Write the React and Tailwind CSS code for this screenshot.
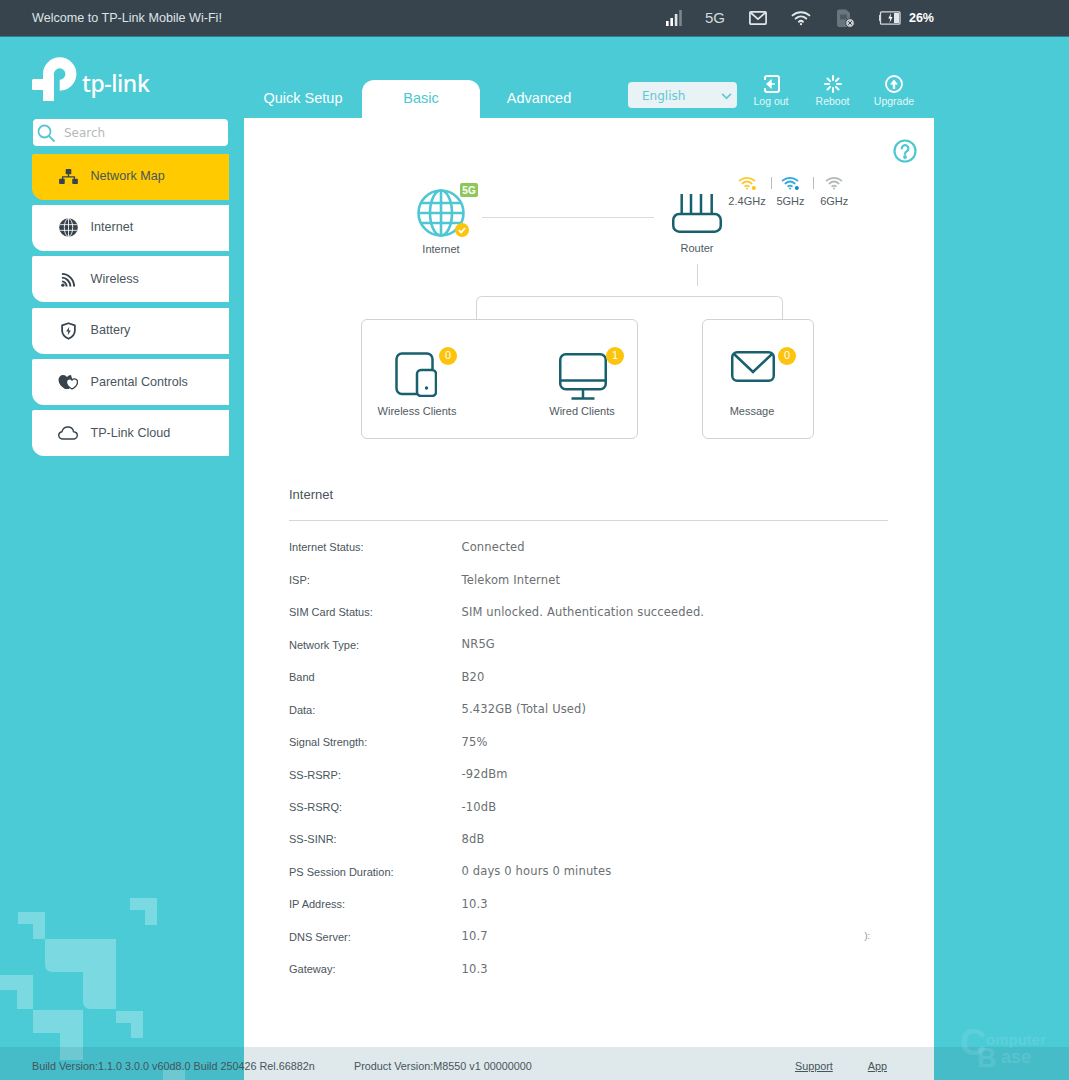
import React from 'react';

const details = [
    ['Internet Status:', 'Connected'],
    ['ISP:', 'Telekom Internet'],
    ['SIM Card Status:', 'SIM unlocked. Authentication succeeded.'],
    ['Network Type:', 'NR5G'],
    ['Band', 'B20'],
    ['Data:', '5.432GB (Total Used)'],
    ['Signal Strength:', '75%'],
    ['SS-RSRP:', '-92dBm'],
    ['SS-RSRQ:', '-10dB'],
    ['SS-SINR:', '8dB'],
    ['PS Session Duration:', '0 days 0 hours 0 minutes'],
    ['IP Address:', '10.3'],
    ['DNS Server:', '10.7', '):'],
    ['Gateway:', '10.3'],
];

const WifiIcon = ({ color, dot, className }) => (
    <svg viewBox="0 0 20 15" className={className} fill="none" stroke={color} strokeWidth="1.9" strokeLinecap="round">
        <path d="M1.5 5C6 1 13 1 17.5 5" />
        <path d="M4.5 8C7.5 5.5 11.5 5.5 14.5 8" />
        <path d="M7.5 11C8.8 10 10.2 10 11.5 11" />
        <circle cx="9.5" cy="13.4" r="1.1" fill={color} stroke="none" />
        {dot && <circle cx="16.8" cy="12.8" r="2.1" fill={dot} stroke="none" />}
    </svg>
);

const NetworkIcon = () => (
    <svg viewBox="0 0 20 16" className="w-[19px] h-[15px]" fill="#37444d">
        <rect x="7" y="0" width="6" height="5.5" rx="0.8" />
        <rect x="0" y="10.5" width="6" height="5.5" rx="0.8" />
        <rect x="14" y="10.5" width="6" height="5.5" rx="0.8" />
        <path d="M9.3 5h1.4v2.6H17v3h-1.4V9H4.4v1.6H3v-3h6.3z" />
    </svg>
);

const GlobeIcon = () => (
    <svg viewBox="0 0 20 20" className="w-[19px] h-[19px]">
        <circle cx="10" cy="10" r="9.8" fill="#37444d" />
        <g fill="none" stroke="#fff" strokeWidth="0.9">
            <ellipse cx="10" cy="10" rx="4.4" ry="9.5" />
            <path d="M10 .5v19M1.2 7h17.6M1.2 13h17.6" />
        </g>
    </svg>
);

const RssIcon = () => (
    <svg viewBox="0 0 16 16" className="w-[15px] h-[15px]" fill="none" stroke="#37444d" strokeWidth="2.1">
        <path d="M1 2c7 0 13 6 13 13.5" />
        <path d="M1 6c4.800 0 9 4.200 9 9.500" />
        <path d="M1 10c2.600 0 5 2.400 5 5.500" />
        <circle cx="2" cy="14" r="1.800" fill="#37444d" stroke="none" />
    </svg>
);

const ShieldIcon = () => (
    <svg viewBox="0 0 16 19" className="w-[15px] h-[18px]">
        <path d="M8 1.200 14.800 3.500V9c0 4-2.800 7-6.800 8.800C4 16 1.200 13 1.200 9V3.500z" fill="none" stroke="#37444d" strokeWidth="1.900" strokeLinejoin="round" />
        <path d="M8.800 5 5.500 10h2.200l-.5 4 3.300-5H8.300z" fill="#37444d" />
    </svg>
);

const HeartsIcon = () => (
    <svg viewBox="0 0 20 16" className="w-[20px] h-[16px]">
        <path d="M7 15C3 12.500.5 9.500.5 6 .5 3 2.500 1 5 1c1.800 0 3.200.900 4 2.200C10 1.900 11.300 1 13 1l2 7-4 7z" fill="#37444d" />
        <path d="M14 15c-3-1.800-5.500-4-5.500-6.800 0-2 1.500-3.400 3.200-3.400 1 0 1.800.500 2.300 1.200.5-.7 1.300-1.200 2.300-1.200 1.700 0 3.200 1.400 3.200 3.400C19.500 11 17 13.200 14 15z" fill="#fff" stroke="#37444d" strokeWidth="1.300" />
    </svg>
);

const CloudIcon = () => (
    <svg viewBox="0 0 20 14" className="w-[20px] h-[14px]" fill="none" stroke="#37444d" strokeWidth="1.400" strokeLinejoin="round">
        <path d="M5 13c-2.400 0-4.300-1.600-4.300-3.700 0-1.900 1.400-3.300 3.200-3.600C4.700 3 7 1 9.800 1c3 0 5.300 2 5.700 4.700 2.100.2 3.800 1.600 3.800 3.600 0 2.100-1.800 3.700-4 3.700z" />
    </svg>
);

const navItems = [
    { label: 'Network Map', icon: <NetworkIcon />, active: true },
    { label: 'Internet', icon: <GlobeIcon /> },
    { label: 'Wireless', icon: <RssIcon /> },
    { label: 'Battery', icon: <ShieldIcon /> },
    { label: 'Parental Controls', icon: <HeartsIcon /> },
    { label: 'TP-Link Cloud', icon: <CloudIcon /> },
];

const Badge = ({ value, className }) => (
    <div className={`absolute w-[18px] h-[18px] rounded-full bg-[#fcc40c] text-white text-[11px] flex items-center justify-center ${className}`}>{value}</div>
);

const StatusBar = () => (
    <div className="h-[37px] bg-[#37444d] border-b border-[#2f7f8c] flex items-center pl-[32px] pr-[135px] text-[12.6px] text-[#dfe3e5]">
        <span>Welcome to TP-Link Mobile Wi-Fi!</span>
        <div className="ml-auto flex items-center">
            <svg viewBox="0 0 16 16" className="w-[16px] h-[16px]">
                <rect x="0" y="11" width="2.600" height="5" fill="#fff" />
                <rect x="4.400" y="8" width="2.600" height="8" fill="#fff" />
                <rect x="8.800" y="4" width="2.600" height="12" fill="#dfe3e5" />
                <rect x="13.200" y="0" width="2.600" height="16" fill="#7b868d" />
            </svg>
            <span className="ml-[23px] text-[15px] text-[#d5d9dc]">5G</span>
            <svg viewBox="0 0 18 14" className="ml-[24px] w-[18px] h-[14px]" fill="none" stroke="#e3e6e8" strokeWidth="1.700">
                <rect x="0.900" y="0.900" width="16.200" height="12.200" rx="1" />
                <path d="M1.500 1.500 9 8.200l7.500-6.700" />
            </svg>
            <WifiIcon color="#e3e6e8" className="ml-[24px] w-[21px] h-[16px]" />
            <svg viewBox="0 0 19 19" className="ml-[24px] w-[19px] h-[19px]">
                <path d="M3 .5h7l4 3.500v12a2 2 0 0 1-2 2H3a2 2 0 0 1-2-2v-13.500a2 2 0 0 1 2-2z" fill="#6a767d" />
                <rect x="4" y="5.500" width="7" height="5" rx="0.600" fill="#4d5a62" />
                <circle cx="14" cy="14" r="4.400" fill="#c5cacd" stroke="#37444d" />
                <path d="M12.300 12.300l3.400 3.400m0-3.400-3.400 3.400" stroke="#37444d" strokeWidth="1" />
            </svg>
            <svg viewBox="0 0 22 14" className="ml-[24px] w-[22px] h-[14px]">
                <rect x="1.500" y="0.800" width="19.500" height="12.400" rx="1" fill="none" stroke="#d5d9dc" strokeWidth="1.300" />
                <rect x="0" y="4" width="1.300" height="6" fill="#d5d9dc" />
                <rect x="15" y="2" width="5" height="10" fill="#e3e6e8" />
                <path d="M12 2 9.300 7.500h2l-.8 4.500 3-6h-2z" fill="#fff" />
            </svg>
            <span className="ml-[8px] text-[12.5px] font-bold text-white">26%</span>
        </div>
    </div>
);

const Sidebar = () => (
    <div className="w-[197px] mr-[15px] shrink-0">
        <div className="h-[82px] pt-[20px] flex items-start">
            <svg viewBox="0 0 46 46" className="w-[46px] h-[46px]">
                <path d="M16.500 44V17a11.200 11.200 0 1 1 11.200 11.200" fill="none" stroke="#fff" strokeWidth="11" />
                <rect x="0" y="22" width="22" height="11" rx="1.500" fill="#fff" />
            </svg>
            <span className="ml-[4px] mt-[8px] font-['Noto_Sans',sans-serif] text-[23px] leading-[36px] font-medium tracking-[-0.4px] text-white">tp-link</span>
        </div>
        <div className="ml-[1px] w-[195px] h-[27px] pt-[1px] bg-white rounded-[4px] flex items-center pl-[4px]">
            <svg viewBox="0 0 18 18" className="w-[18px] h-[18px]" fill="none" stroke="#59c6d2" strokeWidth="1.800" strokeLinecap="round">
                <circle cx="7.500" cy="7.500" r="6" />
                <path d="M12 12l5 5" />
            </svg>
            <span className="ml-[9px] font-['DejaVu_Sans',sans-serif] text-[12px] text-[#b5b9bc]">Search</span>
        </div>
        <div className="mt-[7.5px] flex flex-col gap-[5.4px]">
            {navItems.map((item) => (
                <div key={item.label} className={`h-[46px] rounded-bl-[12px] rounded-tl-[2px] flex items-center text-[12.6px] text-[#4a555c] ${item.active ? 'bg-[#ffcb00] text-[#3e4a3a]' : 'bg-white'}`}>
                    <div className="ml-[24px] mr-[10.5px] w-[24px] flex justify-center">{item.icon}</div>
                    {item.label}
                </div>
            ))}
        </div>
    </div>
);

const TopNav = () => (
    <div className="h-[81px] flex items-end text-white">
        <div className="w-[118px] h-[38px] flex items-center justify-center text-[14.5px]">Quick Setup</div>
        <div className="w-[118px] h-[38px] flex items-center justify-center text-[14.5px] bg-white rounded-t-[12px] text-[#4cc7d3]">Basic</div>
        <div className="w-[118px] h-[38px] flex items-center justify-center text-[14.5px]">Advanced</div>
        <div className="ml-[30px] mb-[10px] w-[109px] h-[26px] pt-[2px] bg-[#e9f2f4] rounded-[4px] flex items-center justify-between pl-[14px] pr-[5px] font-['DejaVu_Sans',sans-serif] text-[12px] text-[#5ec9d4]">
            English
            <svg viewBox="0 0 12 8" className="w-[11px] h-[7px]" fill="none" stroke="#5ec9d4" strokeWidth="2"><path d="M1 1l5 5 5-5" /></svg>
        </div>
        <div className="ml-[3px] mb-[8px] w-[62px] flex flex-col items-center text-[10.5px] text-[#e6f7f9]">
            <svg viewBox="0 0 18 18" className="w-[18px] h-[18px]" fill="none" stroke="#fff" strokeWidth="2">
                <path d="M3 5V3a2 2 0 0 1 2-2h10a2 2 0 0 1 2 2v12a2 2 0 0 1-2 2H5a2 2 0 0 1-2-2v-2" />
                <path d="M5 9l4-3.500v7zM8 9h5" fill="#fff" strokeWidth="1.400" />
            </svg>
            <span className="mt-[1.5px]">Log out</span>
        </div>
        <div className="mb-[8px] w-[61px] flex flex-col items-center text-[10.5px] text-[#e6f7f9]">
            <svg viewBox="0 0 18 18" className="w-[18px] h-[18px]" fill="none" stroke="#fff" strokeWidth="2" strokeLinecap="round">
                <path d="M9 1v4M9 13v4M1 9h4M13 9h4M3.500 3.500l2.600 2.600M11.900 11.900l2.600 2.600M14.500 3.500l-2.600 2.600M6.100 11.900l-2.600 2.600" />
            </svg>
            <span className="mt-[1.5px]">Reboot</span>
        </div>
        <div className="mb-[8px] w-[62px] flex flex-col items-center text-[10.5px] text-[#e6f7f9]">
            <svg viewBox="0 0 18 18" className="w-[18px] h-[18px]" fill="none" stroke="#fff" strokeWidth="1.800">
                <circle cx="9" cy="9" r="8" />
                <path d="M9 4.500 13 9.500H10.200V14H7.800V9.500H5z" fill="#fff" stroke="none" />
            </svg>
            <span className="mt-[1.5px]">Upgrade</span>
        </div>
    </div>
);

const Band = ({ color, dot, label }) => (
    <div className="w-[40px] flex flex-col items-center">
        <WifiIcon color={color} dot={dot} className="w-[19px] h-[14px]" />
        <span className="mt-[3px]">{label}</span>
    </div>
);

const Topology = () => (
    <div className="h-[362px] text-[11px] text-[#4f5a61]">
        {/* help */}
        <div className="h-[45px] pt-[21px] pr-[17px] flex justify-end">
            <svg viewBox="0 0 24 24" className="w-[24px] h-[24px]" fill="none" stroke="#4cc7d3" strokeWidth="2.200" strokeLinecap="round">
                <circle cx="12" cy="12" r="10.500" />
                <path d="M8.800 9.500a3.300 3.300 0 1 1 5 2.800c-1.100.7-1.800 1.300-1.800 2.700" />
                <circle cx="12" cy="18" r="0.800" fill="#4cc7d3" />
            </svg>
        </div>

        {/* internet -- router */}
        <div className="h-[101px] pl-[166px] flex items-start">
            <div className="w-[62px] mt-[25px] flex flex-col items-center">
                <div className="relative w-[50px] h-[50px]">
                    <svg viewBox="0 0 50 50" className="w-[50px] h-[50px]" fill="none" stroke="#4cc7d3" strokeWidth="2.600">
                        <circle cx="25" cy="25" r="22.500" />
                        <ellipse cx="25" cy="25" rx="11" ry="22.500" />
                        <path d="M25 2.500v45M5 15h40M2.500 25h45M5 35h40" />
                    </svg>
                    <div className="absolute left-[44px] top-[-5px] w-[18px] h-[14px] rounded-[2px] bg-[#8fc85a] text-white text-[10px] font-bold flex items-center justify-center">5G</div>
                    <svg viewBox="0 0 14 14" className="absolute left-[38.500px] top-[35px] w-[14px] h-[14px]">
                        <circle cx="7" cy="7" r="7" fill="#fcc40c" />
                        <path d="M3.800 7.200l2.300 2.200 4.200-4.400" fill="none" stroke="#fff" strokeWidth="1.800" />
                    </svg>
                </div>
                <span className="mt-[3px]">Internet</span>
            </div>
            <div className="ml-[10px] mt-[54px] w-[172px] h-px bg-[#d8dcde]"></div>
            <div className="ml-[18px] mt-[31px] w-[50px] flex flex-col items-center">
                <svg viewBox="0 0 50 39" className="w-[50px] h-[39px]" fill="none" stroke="#17606e" strokeWidth="2.500">
                    <path d="M9.700 0v20M19 0v20M29 0v20M39.700 0v20" />
                    <rect x="1.250" y="20" width="47.500" height="17.700" rx="6" />
                </svg>
                <span className="mt-[7px]">Router</span>
            </div>
            <div className="ml-[5px] mt-[13px] flex items-start">
                <Band color="#fcc934" dot="#fcc40c" label="2.4GHz" />
                <div className="ml-[3.500px] mt-[1px] w-px h-[12px] bg-[#b8bdc0]"></div>
                <div className="ml-[-1px]"><Band color="#2fa8dc" dot="#1587c9" label="5GHz" /></div>
                <div className="ml-[2.700px] mt-[1px] w-px h-[12px] bg-[#b8bdc0]"></div>
                <Band color="#b4b8ba" label="6GHz" />
            </div>
        </div>

        {/* connector */}
        <div className="ml-[453px] w-px h-[22px] bg-[#d2d6d8]"></div>
        <div className="mt-[10px] ml-[232px] w-[307px] h-[23px] border-t border-x border-[#d2d6d8] rounded-t-[6px]"></div>

        {/* cards */}
        <div className="pl-[117px] flex">
            <div className="w-[277px] h-[120px] pt-[30px] pl-[5px] border border-[#cfd3d5] rounded-[6px] flex gap-[65px]">
                <div className="w-[100px] flex flex-col items-center">
                    <div className="h-[53px] pt-[2px] pr-[2px]">
                        <div className="relative">
                            <svg viewBox="0 0 42 45" className="w-[42px] h-[45px]" fill="none" stroke="#17606e" strokeWidth="2.500">
                                <path d="M22 42H7a5.500 5.500 0 0 1-5.500-5.500V7A5.500 5.500 0 0 1 7 1.500h25A5.500 5.500 0 0 1 37.500 7v11" />
                                <rect x="22" y="18" width="19" height="26" rx="4" fill="#fff" />
                                <circle cx="31.500" cy="36" r="1.700" fill="#17606e" stroke="none" />
                            </svg>
                            <Badge value="0" className="left-[44px] top-[-5.500px]" />
                        </div>
                    </div>
                    Wireless Clients
                </div>
                <div className="w-[100px] flex flex-col items-center">
                    <div className="h-[53px] pt-[3px] pl-[2px]">
                        <div className="relative">
                            <svg viewBox="0 0 48 47" className="w-[48px] h-[47px]" fill="none" stroke="#17606e" strokeWidth="2.500">
                                <rect x="1.250" y="1.250" width="45.500" height="35" rx="5.500" />
                                <path d="M1.250 27.500h45.500M24 36.500v9M12.500 45.500h23" />
                            </svg>
                            <Badge value="1" className="left-[47px] top-[-6.500px]" />
                        </div>
                    </div>
                    Wired Clients
                </div>
            </div>
            <div className="ml-[64px] w-[112px] h-[120px] pt-[30px] pl-[9px] border border-[#cfd3d5] rounded-[6px]">
                <div className="w-[80px] flex flex-col items-center">
                    <div className="h-[53px] pt-[1px] pl-[2px]">
                        <div className="relative">
                            <svg viewBox="0 0 44 31" className="w-[44px] h-[31px]" fill="none" stroke="#17606e" strokeWidth="2.500">
                                <rect x="1.250" y="1.250" width="41.500" height="28.500" rx="5" />
                                <path d="M3 3l19 18L41 3" />
                            </svg>
                            <Badge value="0" className="left-[47px] top-[-4.500px]" />
                        </div>
                    </div>
                    Message
                </div>
            </div>
        </div>
    </div>
);

const InternetDetails = () => (
    <div className="pl-[45px] pr-[46px]">
        <div className="h-[41px] pb-[11px] flex items-center border-b border-[#d4d7d9] text-[13px] text-[#4a555c]">Internet</div>
        <div className="mt-[10.500px]">
            {details.map(([label, value, extra]) => (
                <div key={label} className="h-[32.450px] flex items-center">
                    <span className="w-[172.500px] text-[11px] text-[#4a555c]">{label}</span>
                    <span className="font-['DejaVu_Sans',sans-serif] text-[11.500px] tracking-[0.15px] text-[#6b6f72]">{value}</span>
                    {extra && <span className="ml-auto mr-[18px] text-[9px] text-[#8a8a8a]">{extra}</span>}
                </div>
            ))}
        </div>
    </div>
);

const Pattern = () => (
    <svg viewBox="0 0 190 190" className="absolute left-0 top-[890px] w-[190px] h-[190px]" fill="#fff" fillOpacity="0.27">
        <path d="M130 8h27v27h-12V20h-15z" />
        <path d="M18 22h27v27H33V34H18z" />
        <path d="M45 49h71v70H90a7 7 0 0 1-7-7V82H52a7 7 0 0 1-7-7z" />
        <path d="M0 85h33v34H17V100H0z" />
        <path d="M33 120h50v50H60V143H33z" />
        <path d="M116 121h27v27H131V133H116z" />
        <path d="M163 180h22v10h-22z" />
    </svg>
);

const App = () => {
    return (
        <div className="relative w-[1069px] h-[1080px] overflow-hidden bg-[#4acbd6] font-['Liberation_Sans',Arial,sans-serif]">
            <Pattern />
            <StatusBar />
            <div className="relative flex pl-[32px]">
                <Sidebar />
                <div className="w-[690px]">
                    <TopNav />
                    <div className="h-[962px] bg-white">
                        <Topology />
                        <InternetDetails />
                    </div>
                </div>
            </div>

            {/* translucent footer lies over the page */}
            <div className="absolute left-0 bottom-0 w-full h-[33px] pt-[5px] bg-[#2a6a7a]/15 flex items-center pl-[32px] pr-[182px] text-[10.8px] text-[#46545c]">
                <span className="w-[322px]">Build Version:1.1.0 3.0.0 v60d8.0 Build 250426 Rel.66882n</span>
                <span>Product Version:M8550 v1 00000000</span>
                <span className="ml-auto underline">Support</span>
                <span className="ml-[35px] underline">App</span>
            </div>

            {/* watermark */}
            <div className="absolute left-[960px] top-[1025px] w-[100px] h-[45px] text-white/10 font-bold leading-none">
                <span className="absolute left-0 top-0 text-[36px]">C</span>
                <span className="absolute left-[26px] top-[7px] text-[15px]">omputer</span>
                <span className="absolute left-[17px] top-[20px] text-[27px]">B</span>
                <span className="absolute left-[41px] top-[23px] text-[18px]">ase</span>
            </div>
        </div>
    );
};

export default App;
